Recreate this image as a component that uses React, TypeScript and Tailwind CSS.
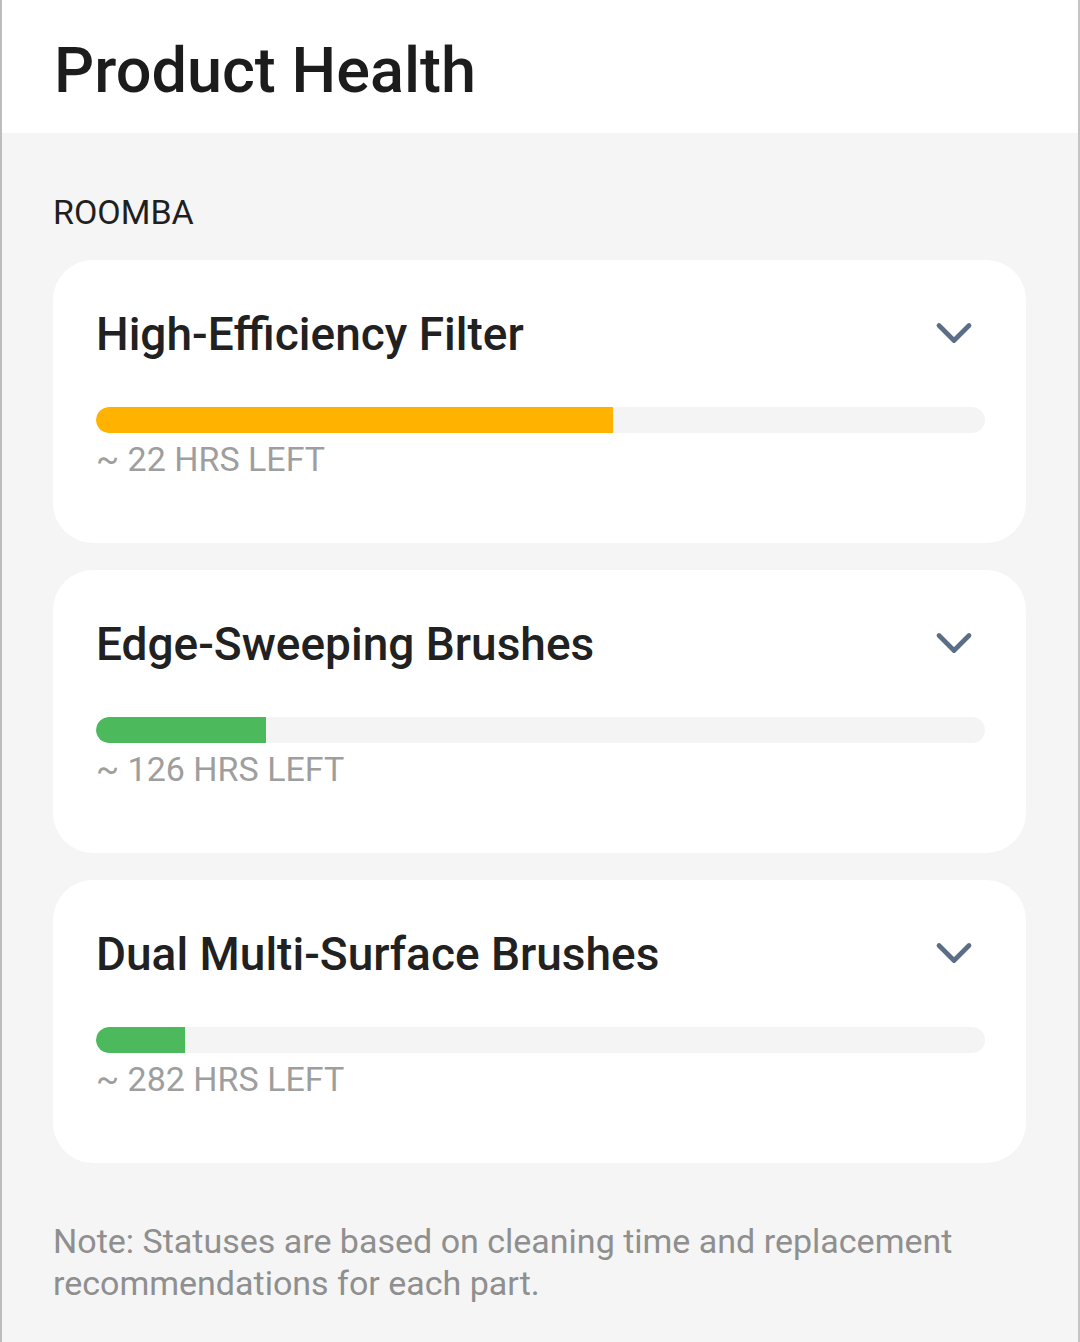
import React from "react";
import { ChevronDown } from "lucide-react";

interface Part {
  name: string;
  hours: number;
  percent: number;
  color: string;
}

const parts: Part[] = [
  { name: "High-Efficiency Filter", hours: 22, percent: 58.1, color: "bg-[#ffb300]" },
  { name: "Edge-Sweeping Brushes", hours: 126, percent: 19.1, color: "bg-[#4cba5c]" },
  { name: "Dual Multi-Surface Brushes", hours: 282, percent: 10, color: "bg-[#4cba5c]" },
];

function PartCard({ part }: { part: Part }) {
  return (
    <div className="bg-white rounded-[40px] pt-[46px] pb-[64px] pl-[43px] pr-[41px]">
      {/* Title row */}
      <div className="flex items-center justify-between h-[56px]">
        <h2 className="text-[46px] leading-[56px] font-medium text-[#212121]">{part.name}</h2>
        <ChevronDown className="w-[60px] h-[60px] text-[#5b6e87] -my-[2px] mr-[1px] -mt-[4px]" strokeWidth={1.9} />
      </div>
      {/* Progress */}
      <div className="mt-[45px] h-[26px] w-full rounded-full bg-[#f4f4f4] overflow-hidden">
        <div className={`h-full rounded-l-full ${part.color}`} style={{ width: `${part.percent}%` }} />
      </div>
      <div className="mt-[6px] text-[34px] leading-[40px] text-[#9e9e9e]">~ {part.hours} HRS LEFT</div>
    </div>
  );
}

export default function App() {
  return (
    <div
      className="min-h-screen bg-[#f5f5f5] border-l-2 border-r-2 border-l-[#bdbdbd] border-r-[#c4c4c4]"
      style={{ fontFamily: "Roboto, 'Noto Sans', sans-serif" }}
    >
      {/* Header */}
      <header className="h-[133px] bg-white flex items-center pl-[52px] pt-[8px]">
        <h1 className="text-[63px] leading-[76px] font-medium text-[#1c1c1c]">Product Health</h1>
      </header>

      <main className="pl-[51px] pr-[52px] pt-[59px] pb-[38px]">
        <div className="text-[34px] leading-[40px] text-[#1f1f1f]">ROOMBA</div>

        <div className="mt-[28px] flex flex-col gap-[27px]">
          {parts.map((p) => (
            <PartCard key={p.name} part={p} />
          ))}
        </div>

        <p className="mt-[57px] text-[34px] leading-[42px] text-[#8f8f8f] pr-[40px]">
          Note: Statuses are based on cleaning time and replacement recommendations for each part.
        </p>
      </main>
    </div>
  );
}
